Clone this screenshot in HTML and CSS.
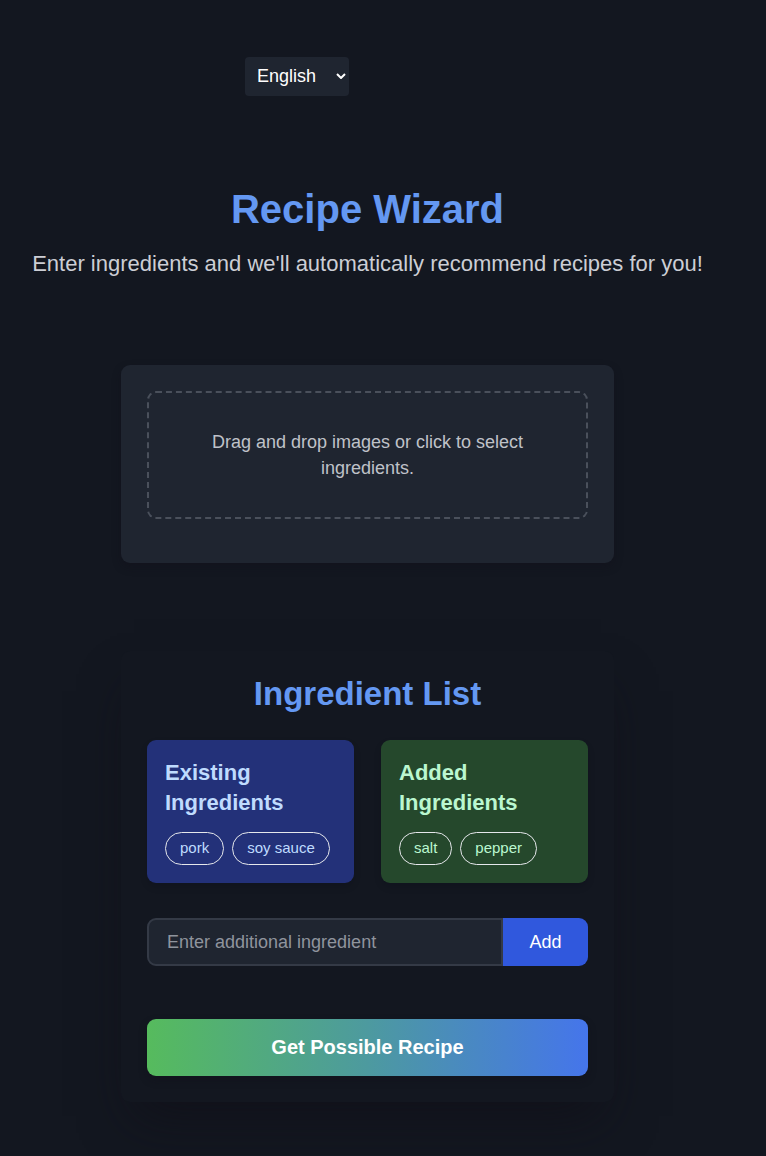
FILE: index.html
```html
<!DOCTYPE html>
<html lang="en">
<head>
<meta charset="utf-8">
<meta name="viewport" content="width=device-width, initial-scale=1">
<title>Recipe Wizard</title>
<link rel="stylesheet" href="styles.css">
</head>
<body>
<div class="page">
  <nav class="language">
    <div class="select-wrap">
      <select class="language-select" aria-label="Language">
        <option>English</option>
      </select>
      <svg class="chevron" viewBox="0 0 10 6" aria-hidden="true"><path d="M1 1l4 4 4-4"/></svg>
    </div>
  </nav>
  <header class="intro">
    <h1 class="title">Recipe Wizard</h1>
    <p class="subtitle">Enter ingredients and we'll automatically recommend recipes for you!</p>
  </header>
  <main class="main">
    <section class="upload">
      <button type="button" class="dropzone">Drag and drop images or click to select ingredients.</button>
    </section>
    <section class="list">
      <h2 class="list-title">Ingredient List</h2>
      <div class="groups">
        <div class="group group-existing">
          <h3 class="group-title">Existing Ingredients</h3>
          <ul class="tags">
            <li class="tag">pork</li>
            <li class="tag">soy sauce</li>
          </ul>
        </div>
        <div class="group group-added">
          <h3 class="group-title">Added Ingredients</h3>
          <ul class="tags">
            <li class="tag">salt</li>
            <li class="tag">pepper</li>
          </ul>
        </div>
      </div>
      <form class="add-form">
        <input class="add-input" type="text" placeholder="Enter additional ingredient" aria-label="Additional ingredient">
        <button class="add-button" type="button">Add</button>
      </form>
      <button class="recipe-button" type="button">Get Possible Recipe</button>
    </section>
  </main>
</div>
</body>
</html>
```
FILE: styles.css
```css
* {
  box-sizing: border-box;
}

body {
  margin: 0;
  background: #131720;
  color: #ccced5;
  font-family: "Liberation Sans", Arial, sans-serif;
  font-size: 18px;
  line-height: 26px;
}

h1, h2, h3, p, ul {
  margin: 0;
  padding: 0;
}

button, input, select {
  font: inherit;
}

.page {
  padding: 57px 31px 53px 0;
  overflow: hidden;
}

.language {
  display: flex;
  justify-content: center;
  padding-right: 141px;
}

.select-wrap {
  position: relative;
}

.language-select {
  display: block;
  width: 104px;
  height: 39px;
  padding: 0 12px 2px;
  appearance: none;
  border: 0;
  border-radius: 4px;
  background: #1f2530;
  color: #fff;
}

.chevron {
  position: absolute;
  top: 16px;
  right: 3px;
  width: 10px;
  height: 6px;
  fill: none;
  stroke: #fff;
  stroke-width: 2;
  pointer-events: none;
}

.intro {
  padding: 88px 0;
  text-align: center;
}

.title {
  margin-bottom: 16px;
  color: #6498f2;
  font-size: 40px;
  line-height: 50px;
}

.subtitle {
  font-size: 22px;
  line-height: 27px;
}

.main {
  width: 100%;
  max-width: 493px;
  margin: 0 auto;
}

.upload {
  padding: 26px 26px 44px;
  border-radius: 9px;
  background: #1f2530;
  box-shadow: 0 4px 8px rgba(17, 16, 26, 0.4);
}

.dropzone {
  display: block;
  width: 100%;
  padding: 36px;
  border: 2px dashed #4a505b;
  border-radius: 9px;
  background: transparent;
  color: #bfc2c8;
  line-height: 26px;
}

.list {
  margin-top: 88px;
  padding: 26px;
  border-radius: 9px;
  background: #131720;
  box-shadow: 0 27px 48px -13px rgba(15, 13, 22, 0.6);
}

.list-title {
  margin-bottom: 30px;
  color: #6498f2;
  font-size: 33px;
  line-height: 33px;
  text-align: center;
}

.groups {
  display: grid;
  grid-template-columns: 1fr 1fr;
  gap: 27px;
}

.group {
  padding: 18px;
  border-radius: 9px;
  box-shadow: 0 4px 7px rgba(10, 10, 18, 0.15);
}

.group-existing {
  background: #233179;
  color: #bfdbfe;
}

.group-added {
  background: #25482c;
  color: #bbf7d0;
}

.group-title {
  margin-bottom: 14px;
  font-size: 22px;
  line-height: 30px;
}

.tags {
  display: flex;
  flex-wrap: wrap;
  gap: 8px;
  list-style: none;
}

.tag {
  padding: 3px 14px 5px;
  border: 1px solid #e5e7eb;
  border-radius: 17px;
  font-size: 15px;
  line-height: 23px;
}

.add-form {
  display: flex;
  margin: 35px 0 53px;
}

.add-input {
  flex: 1;
  min-width: 0;
  height: 48px;
  padding: 0 18px;
  border: 2px solid #343a46;
  border-radius: 9px 0 0 9px;
  background: #1f2530;
  color: #fff;
}

.add-input::placeholder {
  color: #8f949d;
}

.add-button {
  width: 85px;
  border: 0;
  border-radius: 0 9px 9px 0;
  background: #3058dd;
  color: #fff;
}

.recipe-button {
  width: 100%;
  height: 57px;
  padding: 0 0 2px;
  border: 0;
  border-radius: 9px;
  background: linear-gradient(to right, #56bb5d, #4d9a9f, #4575eb);
  box-shadow: 0 4px 8px rgba(15, 12, 22, 0.3);
  color: #fff;
  font-size: 20px;
  font-weight: bold;
}
```
